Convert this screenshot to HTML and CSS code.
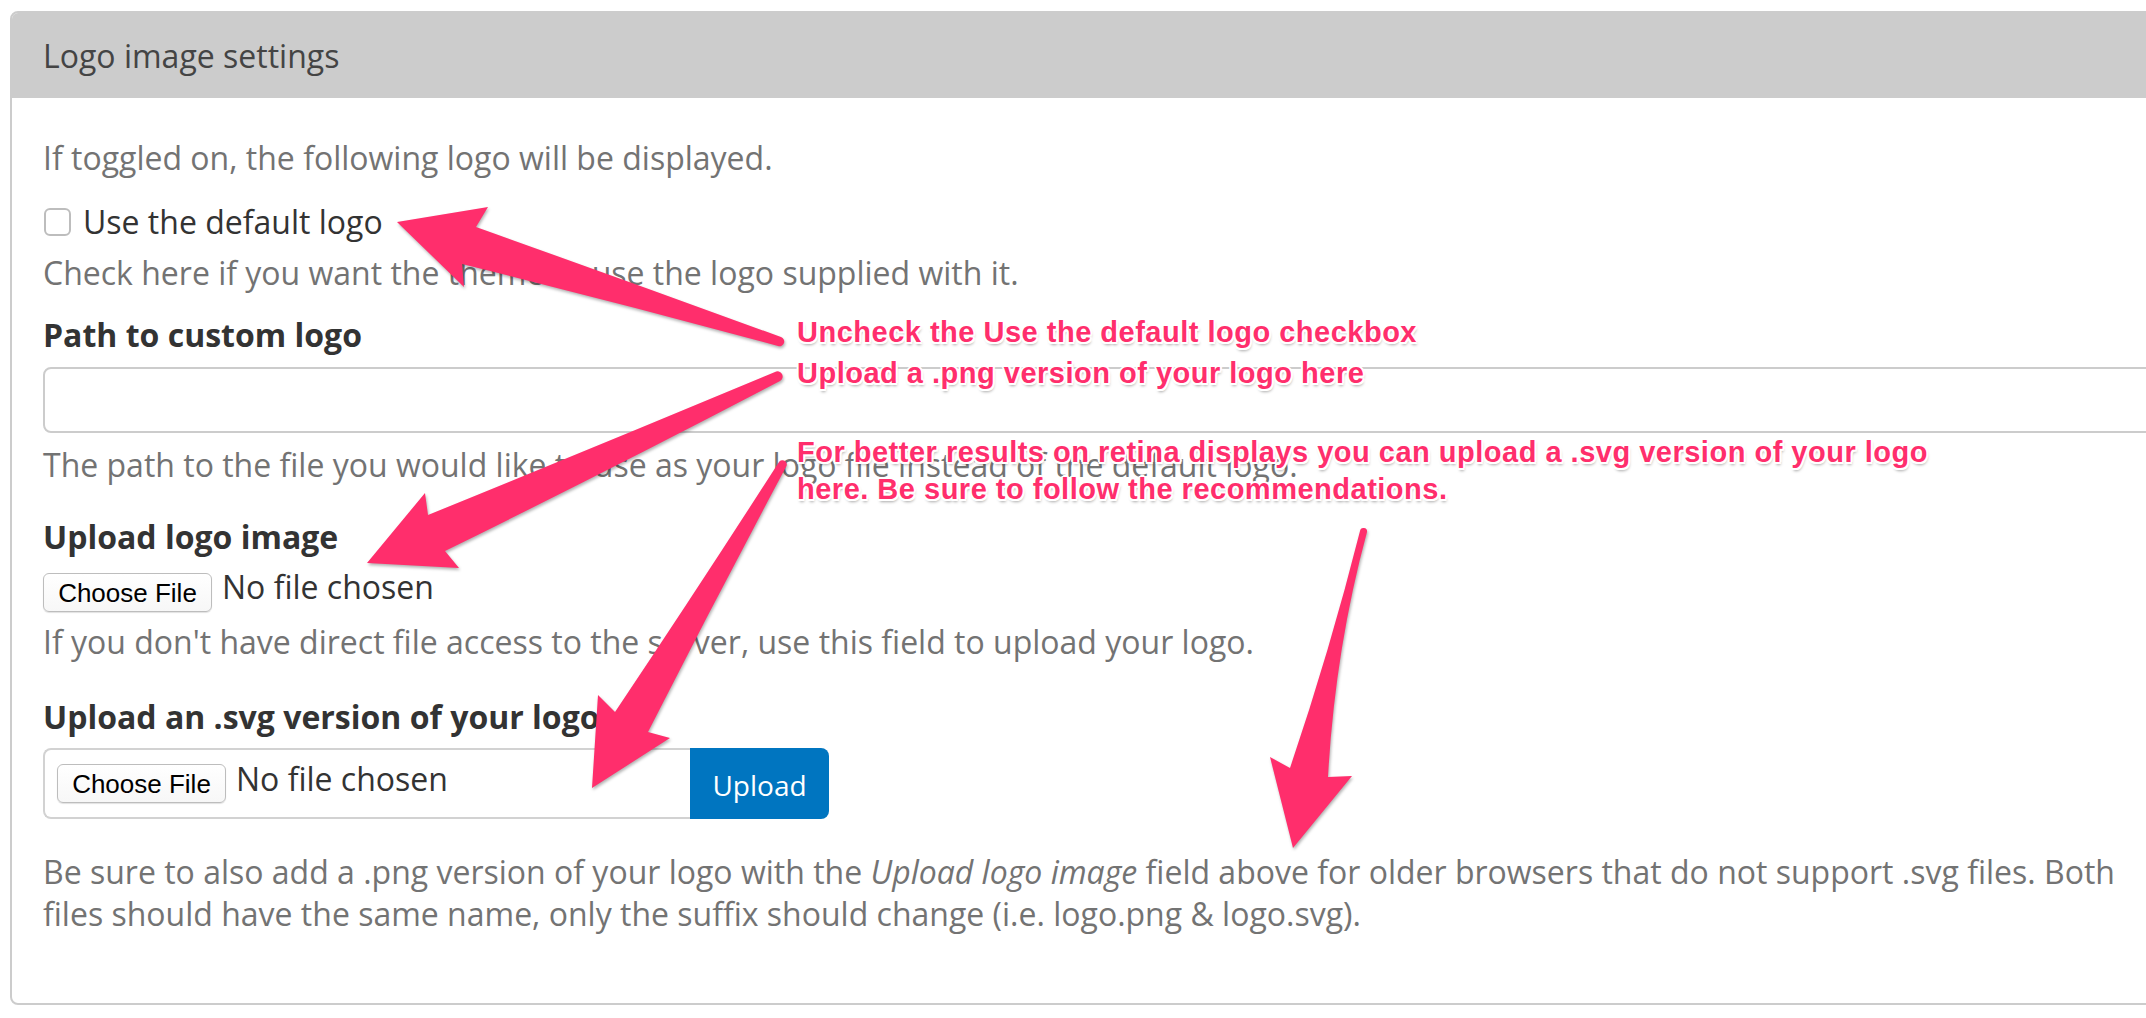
FILE: index.html
```html
<!DOCTYPE html>
<html lang="en">
<head>
<meta charset="utf-8">
<title>Logo image settings</title>
<link rel="stylesheet" href="styles.css">
</head>
<body>
<div class="page">
  <section class="panel">
    <div class="panel-head">Logo image settings</div>
    <div class="panel-body">
      <p class="desc desc-first">If toggled on, the following logo will be displayed.</p>
      <label class="check-row"><span class="checkbox"></span><span>Use the default logo</span></label>
      <p class="desc desc-tight">Check here if you want the theme to use the logo supplied with it.</p>
      <h3 class="field-label label-near">Path to custom logo</h3>
      <div class="text-input"></div>
      <p class="desc desc-after-input">The path to the file you would like to use as your logo file instead of the default logo.</p>
      <h3 class="field-label label-far">Upload logo image</h3>
      <div class="file-row">
        <span class="file-btn">Choose File</span>
        <span class="file-name">No file chosen</span>
      </div>
      <p class="desc desc-tight">If you don't have direct file access to the server, use this field to upload your logo.</p>
      <h3 class="field-label label-farther">Upload an .svg version of your logo</h3>
      <div class="upload-group">
        <div class="upload-field">
          <span class="file-btn">Choose File</span>
          <span class="file-name">No file chosen</span>
        </div>
        <span class="upload-btn">Upload</span>
      </div>
      <p class="desc desc-last">Be sure to also add a .png version of your logo with the <em>Upload logo image</em> field above for older browsers that do not support .svg files. Both files should have the same name, only the suffix should change (i.e. logo.png &amp; logo.svg).</p>
    </div>
  </section>

  <svg class="arrows" width="2146" height="1018" viewBox="0 0 2146 1018" xmlns="http://www.w3.org/2000/svg">
    <g fill="#ff2e6c">
      <path d="M397,222 L488,207 L476,227 Q630,282 781,337 A4.5,4.5 0 0 1 778,346 Q620,303 462,264 L464,287 Z"/>
      <path d="M367,563 L425,493 L428,515 Q600,445 775,372 A4.5,4.5 0 0 1 780,381 Q610,470 445,551 L459,568 Z"/>
      <path d="M592,788 L598,695 L615,712 Q700,585 779,462 A4,4 0 0 1 786,467 Q715,600 648,732 L670,738 Z"/>
      <path d="M1293,848 L1270,757 L1290,768 Q1330,650 1360,531 A3.5,3.5 0 0 1 1367,532 Q1335,650 1328,777 L1352,776 Z"/>
    </g>
  </svg>
  <div class="note note-1">Uncheck the Use the default logo checkbox</div>
  <div class="note note-2">Upload a .png version of your logo here</div>
  <div class="note note-3">For better results on retina displays you can upload a .svg version of your logo<br>here. Be sure to follow the recommendations.</div>
</div>
</body>
</html>
```

FILE: styles.css
```css
html, body {
  margin: 0;
  padding: 0;
  overflow: hidden;
  background: #ffffff;
}

.page {
  position: relative;
  width: 2146px;
  height: 1018px;
  padding-top: 11px;
  box-sizing: border-box;
  font-family: "Open Sans", "Noto Sans", sans-serif;
  font-size: 32px;
  line-height: 42px;
}

.panel {
  margin-left: 10px;
  width: 2200px;
  box-sizing: border-box;
  border: 2px solid #cccccc;
  border-radius: 8px 8px 8px 8px;
  overflow: hidden;
}

.panel-head {
  height: 85px;
  line-height: 85px;
  background: #cccccc;
  color: #444444;
  padding-left: 31px;
}

.panel-body {
  padding: 39px 31px 68px 31px;
}

.desc {
  margin: 0;
  color: #737373;
}

.desc-tight { margin-top: 9px; }
.desc-after-input { margin-top: 11px; }
.desc-last { margin-top: 32px; }

.check-row {
  display: flex;
  align-items: center;
  height: 42px;
  margin-top: 22px;
  color: #333333;
}

.checkbox {
  width: 23px;
  height: 24px;
  border: 2px solid #bdbdbd;
  border-radius: 6px;
  background: #fff;
  margin-right: 12px;
  margin-left: 1px;
}

.field-label {
  margin: 0;
  font-size: 32px;
  font-weight: 700;
  line-height: 42px;
  color: #333333;
}

.label-near { margin-top: 20px; }
.label-far { margin-top: 30px; }
.label-farther { margin-top: 33px; }

.text-input {
  margin-top: 11px;
  height: 66px;
  box-sizing: border-box;
  border: 2px solid #cccccc;
  border-radius: 8px;
  background: #fff;
}

.file-row {
  display: flex;
  align-items: flex-start;
  margin-top: 15px;
  height: 39px;
}

.file-btn {
  display: flex;
  align-items: center;
  justify-content: center;
  width: 169px;
  height: 39px;
  box-sizing: border-box;
  border: 1.5px solid #bdbdbd;
  border-radius: 6px;
  background: linear-gradient(#ffffff, #f7f7f7);
  box-shadow: 0 1px 1px rgba(0, 0, 0, 0.12);
  font-family: "Liberation Sans", Arial, sans-serif;
  font-size: 26px;
  color: #000;
  line-height: 1;
  flex-shrink: 0;
}

.file-name {
  color: #333333;
  margin-left: 10px;
  margin-top: -7px;
}

.upload-group {
  display: flex;
  margin-top: 10px;
  height: 71px;
}

.upload-field {
  width: 647px;
  height: 71px;
  box-sizing: border-box;
  border: 2px solid #d2d2d2;
  border-right: none;
  border-radius: 8px 0 0 8px;
  display: flex;
  align-items: center;
  padding-left: 12px;
}

.upload-field .file-name {
  margin-left: 10px;
  margin-top: -10px;
}

.upload-btn {
  width: 139px;
  height: 71px;
  padding-top: 3px;
  box-sizing: border-box;
  background: #0075c0;
  color: #ffffff;
  border-radius: 0 8px 8px 0;
  display: flex;
  align-items: center;
  justify-content: center;
  font-size: 28px;
}

.arrows {
  position: absolute;
  left: 0;
  top: 0;
  pointer-events: none;
  filter: drop-shadow(1px 2px 1.5px rgba(0, 0, 0, 0.3));
}

.note {
  position: absolute;
  left: 797px;
  font-family: "Liberation Sans", Arial, sans-serif;
  font-weight: 700;
  font-size: 29px;
  letter-spacing: 0.5px;
  line-height: 36px;
  color: #ff2e6c;
  white-space: nowrap;
  text-shadow:
    -2px 0 0 #fff, 2px 0 0 #fff, 0 -2px 0 #fff, 0 2px 0 #fff,
    -1.5px -1.5px 0 #fff, 1.5px -1.5px 0 #fff, -1.5px 1.5px 0 #fff, 1.5px 1.5px 0 #fff,
    1px 3px 3px rgba(0, 0, 0, 0.35);
}

.note-1 { top: 314px; }
.note-2 { top: 355px; }
.note-3 { top: 434px; line-height: 37px; }
```
